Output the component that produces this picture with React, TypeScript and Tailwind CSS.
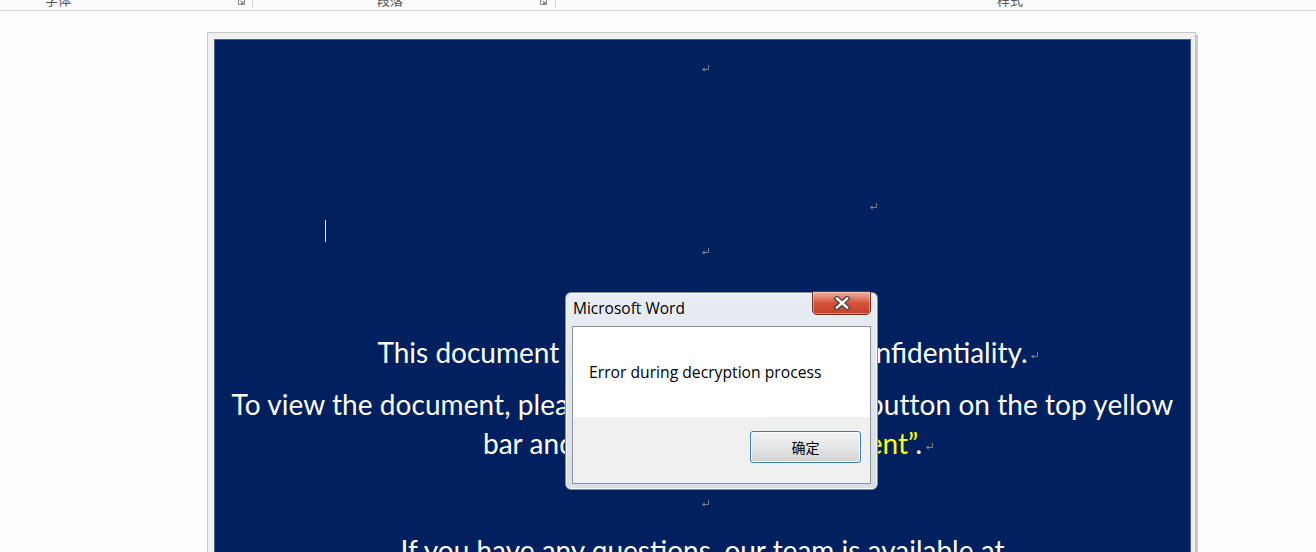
import React from "react"

const ParaMark = ({ className = "" }: { className?: string }) => (
  <svg width="7" height="7" viewBox="0 0 7 7" className={className}>
    <path d="M6.5 0V4.5H2" stroke="#7f7f7f" strokeWidth="1" fill="none" />
    <path d="M0 4.5L2.6 2.2V6.8Z" fill="#7f7f7f" />
  </svg>
)

// trailing pilcrow that does not count toward centering
const TailMark = ({ gap = 3 }: { gap?: number }) => (
  <span className="inline-block w-0 whitespace-nowrap">
    <ParaMark className={gap === 3 ? "inline ml-[3px]" : "inline ml-[4px]"} />
  </span>
)

const Launcher = () => (
  <svg width="7" height="5" viewBox="0 0 7 5">
    <path d="M0.5 0V4.5H6.5V0" stroke="#8a8a8a" fill="none" />
    <path d="M2 0.5L5 3.5M5 1.5V3.5H3" stroke="#6a6a6a" fill="none" />
  </svg>
)

function Ribbon() {
  return (
    <div className="flex h-[11px] border-b border-[#d5d5d5] bg-[#fbfbfb] text-[13px] leading-[13px] text-[#555555] font-['Noto_Sans_CJK_SC',sans-serif]">
      <div className="flex w-[252px] overflow-hidden">
        <span className="-mt-[7px] ml-[45px] whitespace-nowrap">字体</span>
        <span className="ml-auto mr-[7px]"><Launcher /></span>
      </div>
      <div className="w-px h-[8px] bg-[#d9d9d9]" />
      <div className="flex w-[302px] overflow-hidden">
        <span className="-mt-[7px] ml-[124px] whitespace-nowrap">段落</span>
        <span className="ml-auto mr-[8px]"><Launcher /></span>
      </div>
      <div className="w-px h-[8px] bg-[#d9d9d9]" />
      <div className="flex flex-1 overflow-hidden">
        <span className="-mt-[7px] ml-[441px] whitespace-nowrap">样式</span>
      </div>
    </div>
  )
}

function CloseButton() {
  return (
    <div className="-mt-[2px] flex h-[24px] w-[59px] items-center justify-center rounded-b-[5px] border border-[#7a2a1e] bg-gradient-to-b from-[#eab0a4] via-[#d7523b] to-[#c2412a] shadow-[inset_0_0_0_1px_rgba(255,220,210,0.45)]">
      <svg width="20" height="14" viewBox="0 0 20 14">
        <path d="M5 2.5L15 11.5M15 2.5L5 11.5" stroke="#3b3b3b" strokeWidth="5" strokeLinecap="square" />
        <path d="M5 2.5L15 11.5M15 2.5L5 11.5" stroke="#ffffff" strokeWidth="2.6" strokeLinecap="square" />
      </svg>
    </div>
  )
}

function Dialog() {
  return (
    <div className="absolute left-[565px] top-[292px] w-[313px] h-[198px] rounded-[6px] border border-[#838b95] bg-gradient-to-b from-[#e8edf3] to-[#d8dee7] shadow-[inset_0_0_0_1px_#f6f8fa] font-['Open_Sans',sans-serif]">
      <div className="flex h-[33px] justify-between pl-[7px] pr-[6px]">
        <span className="pt-[5px] text-[15.5px] leading-[20px] text-black">Microsoft Word</span>
        <CloseButton />
      </div>
      <div className="mx-[6px] h-[158px] border border-[#8c939c] bg-[#f0f0f0]">
        <div className="h-[90px] bg-white pl-[16px] pt-[35px] text-[15.7px] leading-[20px] text-black">
          Error during decryption process
        </div>
        <div className="flex justify-end pt-[14px] pr-[9px]">
          <div className="flex h-[32px] w-[111px] items-center justify-center rounded-[3px] border border-[#3c7fb1] bg-gradient-to-b from-[#f2f2f2] via-[#e6e6e6] to-[#d3d3d3] shadow-[inset_0_0_0_1px_#fafafa] text-[14px] text-black font-['Noto_Sans_CJK_SC',sans-serif]">
            确定
          </div>
        </div>
      </div>
    </div>
  )
}

export default function App() {
  return (
    <div className="relative h-[552px] w-[1316px] overflow-hidden bg-[#fdfdfd]">
      <Ribbon />

      {/* page */}
      <div className="ml-[207px] mt-[21px] flex w-[989px] h-[600px] border border-[#c6c6c6] bg-[#f0f0f0] pl-[6px] pr-[4px] pt-[6px] shadow-[2px_3px_0_#cacaca]">
        <div className="flex-1 border border-[#4b5d8c] bg-[#002060] font-['Lato',sans-serif] text-white">
          <div className="flex justify-center pt-[25px] pl-[6px]">
            <ParaMark />
          </div>
          <div className="mt-[131px] pl-[655px]">
            <ParaMark className="block" />
          </div>
          <div className="mt-[10px] pl-[110px]">
            <div className="h-[22px] w-px bg-[#efe6d8]" />
          </div>
          <div className="mt-[6px] flex justify-center pl-[6px]">
            <ParaMark />
          </div>

          <p className="mt-[78px] text-center text-[28px] leading-[38px] whitespace-nowrap">
            This document is encrypted to ensure confidentiality.<TailMark />
          </p>
          <p className="mt-[14px] text-center text-[28px] leading-[38.5px] whitespace-nowrap tracking-[0.06px]">
            To view the document, please click <span className="text-[#ffff00]">“Enable Editing”</span> button on the top yellow
            <br />
            bar and then click <span className="text-[#ffff00]">“Enable Content”</span>.<TailMark gap={4} />
          </p>
          <div className="mt-[38px] flex justify-center pl-[6px]">
            <ParaMark />
          </div>
          <p className="mt-[24px] text-center text-[28px] leading-[38px] whitespace-nowrap">
            If you have any questions, our team is available at
          </p>
        </div>
      </div>

      <Dialog />
    </div>
  )
}
